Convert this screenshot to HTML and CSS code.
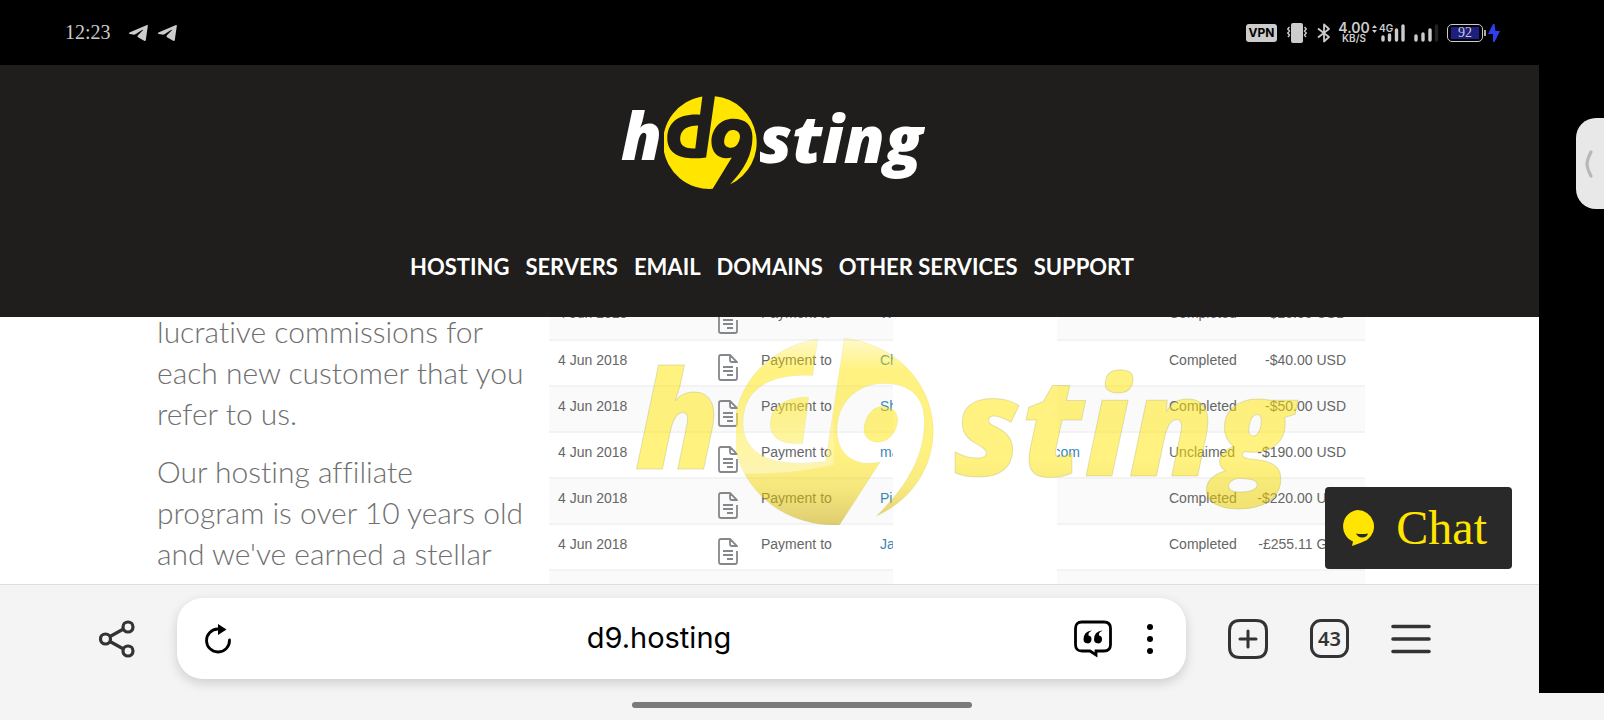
FILE: index.html
```html
<!DOCTYPE html>
<html lang="en">
<head>
<meta charset="utf-8">
<meta name="viewport" content="width=device-width, initial-scale=1">
<title>d9.hosting</title>
<link rel="stylesheet" href="styles.css">
</head>
<body class="device">
<svg class="sprite" aria-hidden="true">
  <defs>
    <symbol id="mark" viewBox="347 85 594 562" preserveAspectRatio="none">
      <path id="mark-shape" fill-rule="evenodd" d="M592 88L577 198C440 190 368 245 368 340C368 445 470 475 616 456L672 86A297 281 0 0 1 768 620C860 530 912 440 912 335C912 258 865 222 790 222C705 222 650 285 650 362C650 435 705 475 780 457L658 646A297 281 0 0 1 592 88ZM565 263L547 402C490 405 450 390 450 345C450 285 500 263 565 263ZM785 291C815 291 834 308 832 334C829 368 806 398 774 398C748 398 729 382 731 358C734 320 757 291 785 291Z"/>
    </symbol>
    <symbol id="doc" viewBox="0 0 20 27">
      <path d="M19 13V24Q19 26 17 26H3Q1 26 1 24V3Q1 1 3 1H12L19 8V9M12 1V6Q12 8 14 8H19M5 13H15M5 17H15M9 21H15" fill="none" stroke="#85888b" stroke-width="1.8"/>
    </symbol>
    <symbol id="plane" viewBox="0 0 19 16">
      <path d="M0 8.300Q0 7.600 1 7.200L18 0Q19 -.2 18.800 1L16.800 15Q16.500 16.500 15.200 15.700L9 12.300Q8 11.500 9 10.300L14.300 4.800Q13.500 4.600 12.600 5.200L6.500 9.300Q5 10 4 9.600L.8 9Q0 8.800 0 8.300Z" fill="currentColor"/>
    </symbol>
  </defs>
</svg>

<div class="status">
  <div class="status-left">
    <time class="clock">12:23</time>
    <svg class="plane" role="img" aria-label="Telegram"><use href="#plane"/></svg>
    <svg class="plane" role="img" aria-label="Telegram"><use href="#plane"/></svg>
  </div>
  <div class="status-right">
    <span class="vpn">VPN</span>
    <svg width="20" height="20" viewBox="0 0 20 20"><rect x="4" y="0" width="12" height="20" rx="2" fill="#ccc"/><path d="M2.500 4L.8 6L2.500 8L.8 10L2.500 12L1 14M17.500 4L19.200 6L17.500 8L19.200 10L17.500 12L19 14" fill="none" stroke="#ccc" stroke-width="1.400"/></svg>
    <svg class="bluetooth" width="14" height="20" viewBox="0 0 14 20"><path d="M1 5.500L12 14L7 18.500V1.500L12 6L1 14.500" fill="none" stroke="#ccc" stroke-width="1.800" stroke-linejoin="round"/></svg>
    <div class="speed"><span class="speed-value">4.00</span><span class="speed-unit">KB/S</span></div>
    <svg class="cell" width="35" height="20" viewBox="0 0 35 20"><path d="M1 5L3.500 2L6 5ZM1 7H6L3.500 10Z" fill="#ccc"/><text x="8" y="9" class="gen">4G</text><path d="M12 14V17M18.500 12V17M25.500 7V17M32 3V17" stroke="#ccc" stroke-width="3.400" stroke-linecap="round"/></svg>
    <svg width="25" height="20" viewBox="0 0 25 20"><path d="M2 13V17M9 11V17M16 7V17" stroke="#ccc" stroke-width="3.400" stroke-linecap="round"/><path d="M22.500 3V17" stroke="#222" stroke-width="3.400" stroke-linecap="round"/></svg>
    <div class="battery"><span class="battery-level">92</span></div>
    <svg class="bolt" width="12" height="18" viewBox="0 0 12 18"><path d="M5 0L0 10H5V18H6.500L12 7H7.500L6.500 0Z" fill="#2f3ef0"/></svg>
  </div>
</div>

<div class="main">
  <div class="browser">
    <header class="site-header">
      <a class="logo" href="#" aria-label="d9 hosting">
        <svg width="300" height="96" viewBox="0 0 300 96">
          <text x="1" y="67" class="logo-text">h</text>
          <use href="#mark" x="44" y="3" width="93" height="93" fill="#ffe500"/>
          <text x="139" y="70" class="logo-text">sting</text>
        </svg>
      </a>
      <nav class="nav">
        <a href="#">HOSTING</a><a href="#">SERVERS</a><a href="#">EMAIL</a><a href="#">DOMAINS</a><a href="#">OTHER SERVICES</a><a href="#">SUPPORT</a>
      </nav>
    </header>

    <main class="page">
      <div class="content">
        <div class="copy">
          <p>lucrative commissions for each new customer that you refer to us.</p>
          <p>Our hosting affiliate program is over 10 years old and we've earned a stellar</p>
        </div>
        <figure class="payments">
          <table class="ledger">
            <colgroup><col class="c-date"><col class="c-icon"><col class="c-type"><col class="c-name"><col class="c-gap"><col class="c-mail"><col class="c-state"><col></colgroup>
            <tbody>
              <tr><td class="date">4 Jun 2018</td><td><svg class="doc"><use href="#doc"/></svg></td><td>Payment to</td><td class="name">W</td><td class="gap"></td><td></td><td>Completed</td><td class="sum">-$20.00 USD</td></tr>
              <tr><td class="date">4 Jun 2018</td><td><svg class="doc"><use href="#doc"/></svg></td><td>Payment to</td><td class="name">Ch</td><td class="gap"></td><td></td><td>Completed</td><td class="sum">-$40.00 USD</td></tr>
              <tr><td class="date">4 Jun 2018</td><td><svg class="doc"><use href="#doc"/></svg></td><td>Payment to</td><td class="name">Sh</td><td class="gap"></td><td></td><td>Completed</td><td class="sum">-$50.00 USD</td></tr>
              <tr><td class="date">4 Jun 2018</td><td><svg class="doc"><use href="#doc"/></svg></td><td>Payment to</td><td class="name">ma</td><td class="gap"></td><td><span class="mail">com</span></td><td>Unclaimed</td><td class="sum">-$190.00 USD</td></tr>
              <tr><td class="date">4 Jun 2018</td><td><svg class="doc"><use href="#doc"/></svg></td><td>Payment to</td><td class="name">Pi</td><td class="gap"></td><td></td><td>Completed</td><td class="sum">-$220.00 USD</td></tr>
              <tr><td class="date">4 Jun 2018</td><td><svg class="doc"><use href="#doc"/></svg></td><td>Payment to</td><td class="name">Ja</td><td class="gap"></td><td></td><td>Completed</td><td class="sum">-£255.11 GBP</td></tr>
              <tr><td class="date"></td><td></td><td>Payment to</td><td class="name"></td><td class="gap"></td><td></td><td></td><td class="sum"></td></tr>
            </tbody>
          </table>
          <svg class="watermark" viewBox="0 0 816 322" aria-hidden="true">
            <defs>
              <linearGradient id="tone" x1="0" y1="0" x2="0" y2="1">
                <stop offset="0" stop-color="#ffe500" stop-opacity=".2"/>
                <stop offset=".17" stop-color="#ffe500" stop-opacity=".5"/>
                <stop offset=".6" stop-color="#ffe500" stop-opacity=".5"/>
                <stop offset=".8" stop-color="#f0d400" stop-opacity=".5"/>
                <stop offset="1" stop-color="#c8a800" stop-opacity=".55"/>
              </linearGradient>
              <linearGradient id="sheen" x1="0" y1="0" x2="0" y2="1">
                <stop offset="0" stop-color="#fff" stop-opacity="0"/>
                <stop offset="1" stop-color="#fff" stop-opacity=".4"/>
              </linearGradient>
              <linearGradient id="tail" gradientUnits="userSpaceOnUse" x1="0" y1="165" x2="0" y2="222">
                <stop offset="0" stop-color="#ffe500" stop-opacity=".5"/>
                <stop offset="1" stop-color="#e6ca00" stop-opacity=".55"/>
              </linearGradient>
              <clipPath id="mark-clip"><use href="#mark-shape" clip-rule="evenodd"/></clipPath>
            </defs>
            <g class="outline">
              <text x="86" y="175" class="mark-h">h</text>
              <use href="#mark" x="187" y="44" width="198" height="187" fill="url(#tone)"/>
              <text x="404" y="182" class="mark-sting" fill="url(#tail)">sting</text>
            </g>
            <svg x="187" y="44" width="198" height="187" viewBox="347 85 594 562" preserveAspectRatio="none">
              <path clip-path="url(#mark-clip)" d="M347 230H640V466Q520 495 347 493Z" fill="url(#sheen)"/>
            </svg>
          </svg>
        </figure>
      </div>
      <button class="chat" type="button">
        <svg width="34" height="36" viewBox="0 0 34 36"><path d="M16.500 0A16.500 16.500 0 0 1 26 30Q20 33 11 36L12 31.500A16.500 16.500 0 0 1 16.500 0Z" fill="#ffe500"/><path d="M15 23.500Q21 24.500 27 23.500Q26 27.500 21 27.500Q17 27.500 15 23.500Z" fill="#292929"/></svg>
        <span>Chat</span>
      </button>
    </main>

    <div class="toolbar">
      <button class="icon" type="button" aria-label="Share"><svg width="36" height="38" viewBox="0 0 36 38"><g fill="none" stroke="#333" stroke-width="3.200"><circle cx="6.500" cy="19" r="5"/><circle cx="29" cy="7" r="5"/><circle cx="29" cy="31" r="5"/><path d="M11 16.500L24.500 9M11 21.500L24.500 29"/></g></svg></button>
      <div class="address">
        <button class="icon" type="button" aria-label="Reload"><svg width="28" height="30" viewBox="0 0 28 30"><path d="M14 5A11.500 11.500 0 1 0 25.500 16" fill="none" stroke="#000" stroke-width="2.800" stroke-linecap="round"/><path d="M14 0L22.500 5.500L14 11Z"/></svg></button>
        <input class="url" type="text" value="d9.hosting" aria-label="Address">
        <button class="icon" type="button" aria-label="Quote"><svg width="38" height="38" viewBox="0 0 38 38"><path d="M16 31H8Q1.500 31 1.500 24.500V8.500Q1.500 2 8 2H30Q36.500 2 36.500 8.500V24.500Q36.500 31 30 31H22V35L16 31Z" fill="none" stroke="#000" stroke-width="2.800"/><path id="q" d="M17.500 11Q14 12 14.500 15.500A4 4 0 1 1 9.500 19.500Q9.500 11.500 17.500 10.500Z"/><use href="#q" x="10.500"/></svg></button>
        <button class="icon dots" type="button" aria-label="Page menu"><svg width="6" height="30" viewBox="0 0 6 30"><circle cx="3" cy="3" r="3"/><circle cx="3" cy="15" r="3"/><circle cx="3" cy="27" r="3"/></svg></button>
      </div>
      <button class="icon" type="button" aria-label="New tab"><svg width="40" height="40" viewBox="0 0 40 40"><path d="M12 1.500H28Q38.500 1.500 38.500 12V28Q38.500 38.500 28 38.500H12Q1.500 38.500 1.500 28V12Q1.500 1.500 12 1.500ZM12 20H28M20 12V28" fill="none" stroke="#333" stroke-width="3" stroke-linecap="round"/></svg></button>
      <button class="tabs" type="button" aria-label="43 open tabs">43</button>
      <button class="icon" type="button" aria-label="Menu"><svg width="40" height="30" viewBox="0 0 40 30"><path d="M2 2.500H38M2 15H38M2 27.500H38" stroke="#333" stroke-width="3.600" stroke-linecap="round"/></svg></button>
    </div>
  </div>
  <aside class="rail">
    <button class="handle" type="button" aria-label="Open side panel"><svg width="8" height="28" viewBox="0 0 8 28"><path d="M6 2Q2 10 2 14Q2 18 6 26" fill="none" stroke="#b8b8b8" stroke-width="3.200" stroke-linecap="round"/></svg></button>
  </aside>
</div>

<div class="gesture"><span class="gesture-bar"></span></div>
</body>
</html>
```
FILE: styles.css
```css
* { box-sizing: border-box; }

.device {
  margin: 0;
  height: 100vh;
  display: flex;
  flex-direction: column;
  background: #000;
  overflow: hidden;
  font-family: Lato, sans-serif;
}

svg { display: block; flex: none; }
.sprite { position: absolute; width: 0; height: 0; }
button { border: 0; padding: 0; background: none; font: inherit; color: inherit; }

/* Status bar */
.status {
  flex: none;
  height: 65px;
  padding: 0 104px 0 65px;
  display: flex;
  align-items: center;
  justify-content: space-between;
  color: #ccc;
}
.status-left, .status-right { display: flex; align-items: center; }
.status-left { gap: 10px; }
.clock { font: 20px "Liberation Serif", serif; margin-right: 8px; }
.plane { width: 19px; height: 16px; }
.status-right { gap: 8px; }
.vpn {
  width: 31px;
  height: 18px;
  margin-right: 2px;
  border-radius: 3px;
  background: #ccc;
  color: #000;
  font: bold 12px/18px Inter, sans-serif;
  text-align: center;
}
.bluetooth { margin-left: 2px; }
.speed { display: flex; flex-direction: column; align-items: center; width: 30px; }
.speed-value { font: 600 14px/12px Inter, sans-serif; }
.speed-unit { font: 600 10px/9px Inter, sans-serif; }
.cell { margin-left: -6px; }
.gen { font: 600 10px Inter, sans-serif; fill: #ccc; }
.battery {
  position: relative;
  width: 36px;
  height: 18px;
  padding: 2px;
  border: 1px solid #ccc;
  border-radius: 5px;
}
.battery::after {
  content: "";
  position: absolute;
  right: -4px;
  top: 5px;
  width: 2px;
  height: 6px;
  background: #aaa;
}
.battery-level {
  display: block;
  width: 28px;
  height: 12px;
  margin: 0 auto;
  background: #1c1f80;
  font: 14px/12px "Liberation Serif", serif;
  text-align: center;
}
.bolt { margin-left: -3px; }

/* Browser area */
.main { flex: 1; min-height: 0; display: flex; }
.browser { flex: 1; min-width: 0; display: flex; flex-direction: column; background: #fff; }
.rail { width: 65px; display: flex; flex-direction: column; align-items: flex-end; padding-top: 53px; }
.handle {
  width: 28px;
  height: 91px;
  padding-left: 9px;
  border-radius: 20px 0 0 20px;
  background: #e8e8e8;
}

.site-header {
  flex: none;
  display: flex;
  flex-direction: column;
  align-items: center;
  gap: 59px;
  padding: 28px 0 32px;
  background: #1f1e1c;
}
.logo svg { overflow: visible; }
.logo-text { font: italic 800 66px "Open Sans", sans-serif; fill: #fff; }
.nav { display: flex; gap: 16px; padding-left: 5px; }
.nav a { color: #fff; font-size: 22px; font-weight: 700; line-height: 37px; text-decoration: none; }

.page { position: relative; flex: 1; min-height: 0; overflow: hidden; }
.content { display: flex; margin-top: -23px; padding: 0 174px 0 157px; }
.copy {
  width: 392px;
  flex: none;
  padding: 17px 24px 0 0;
  color: #6f6f6f;
  font-size: 30px;
  font-weight: 300;
  line-height: 41px;
  font-variant-ligatures: none;
}
.copy p { margin: 0 0 17px; }

.payments { position: relative; flex: 1; margin: 0; }
.ledger {
  width: 100%;
  table-layout: fixed;
  border-collapse: collapse;
  color: #666;
  font: 14px/20px "Liberation Sans", Arial, sans-serif;
}
.ledger tr { height: 46px; background: #fff; }
.ledger tr:nth-child(odd) { background: #fafafa; }
.ledger td { height: 46px; padding: 9px 0 0; border-bottom: 2px solid #f3f3f3; vertical-align: top; white-space: nowrap; }
.ledger .date { padding-left: 9px; }
.ledger .name { overflow: hidden; color: #3a87b5; }
.ledger .gap { background: #fff; border-color: #fff; }
.ledger .sum { padding-right: 19px; text-align: right; }
.c-date { width: 169px; }
.c-icon { width: 43px; }
.c-type { width: 119px; }
.c-name { width: 13px; }
.c-gap { width: 164px; }
.c-mail { width: 112px; }
.c-state { width: 80px; }
.doc { width: 20px; height: 27px; margin-top: 4px; }
.mail { display: flex; justify-content: flex-end; width: 23px; overflow: hidden; color: #3a87b5; }

.watermark { position: absolute; top: 0; left: 0; width: 100%; }
.outline { stroke: #8a9a60; stroke-opacity: .25; }
.mark-h, .mark-sting { font: italic 800 137px "Open Sans", sans-serif; }
.mark-h { fill: #ffe500; fill-opacity: .5; }

.chat {
  position: absolute;
  right: 27px;
  bottom: 15px;
  height: 82px;
  padding: 0 25px 0 16px;
  display: flex;
  align-items: center;
  gap: 21px;
  border-radius: 4px;
  background: #292929;
  color: #ffe500;
  font: 48px/82px "Liberation Serif", serif;
}

/* Browser toolbar */
.toolbar {
  flex: none;
  height: 109px;
  display: flex;
  align-items: center;
  gap: 42px;
  padding: 0 108px 1px 99px;
  border-top: 1px solid #dedede;
  background: #f4f4f4;
}
.address {
  flex: 1;
  height: 81px;
  display: flex;
  align-items: center;
  padding: 0 33px 0 27px;
  border-radius: 26px;
  background: #fff;
  box-shadow: 0 4px 12px rgba(0, 0, 0, .16);
}
.url {
  flex: 1;
  min-width: 0;
  border: 0;
  padding: 0 0 2px 12px;
  background: none;
  color: #000;
  font: 29px/36px Inter, sans-serif;
  text-align: center;
}
.dots { margin-left: 35px; }
.tabs {
  width: 39px;
  height: 39px;
  border: 3px solid #333;
  border-radius: 11px;
  color: #333;
  font: 600 20px/33px "Noto Sans", sans-serif;
}

.gesture { flex: none; height: 27px; padding-bottom: 3px; display: flex; align-items: center; justify-content: center; background: #f4f4f4; }
.gesture-bar { width: 340px; height: 6px; border-radius: 3px; background: #7a7a7a; }
```
